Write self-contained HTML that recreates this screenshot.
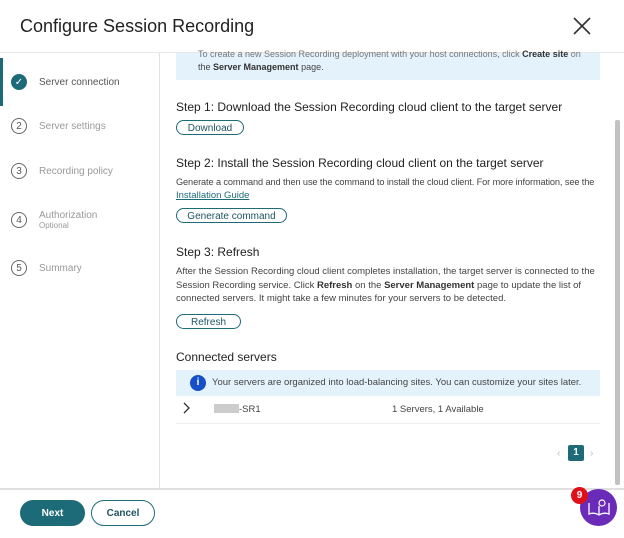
<!DOCTYPE html>
<html><head><style>
*{margin:0;padding:0;box-sizing:border-box}
body{width:624px;height:538px;background:#fff;font-family:"Liberation Sans",sans-serif;color:#333;position:relative;overflow:hidden}
.abs{position:absolute}
.h1{left:20px;top:16px;font-size:18px;color:#222}
.side{left:0;top:53px;width:160px;height:435px;border-right:1px solid #e2e2e2}
.topline{left:0;top:52px;width:624px;height:1px;background:#e8e8e8}
.footline{left:0;top:488px;width:624px;height:2px;background:#e0e0e0}
.step{left:11px;font-size:10px;color:#999;display:flex;align-items:center}
.num{width:16px;height:16px;border:1.3px solid #666;border-radius:50%;font-size:10px;color:#555;display:flex;align-items:center;justify-content:center;margin-right:12px}
.t{font-size:10px;color:#444;white-space:nowrap}
.h{font-size:12px;color:#222}
.btn{border:1.5px solid #1d6b78;border-radius:10px;font-size:10px;color:#1d5561;height:15px;display:flex;align-items:center;justify-content:center;padding-top:1px}
.fb{display:flex;align-items:center;justify-content:center;padding-top:1px}
b{color:#333}
</style></head><body>
<div class="abs h1">Configure Session Recording</div>
<svg class="abs" style="left:573px;top:17px" width="18" height="18"><path d="M1 1L17 17M17 1L1 17" stroke="#333" stroke-width="1.6"/></svg>
<div class="abs topline"></div>
<div class="abs side"></div>
<div class="abs" style="left:0;top:58px;width:3px;height:48px;background:#1d6b78"></div>
<div class="abs step" style="top:74px"><div class="num" style="background:#1d6b78;border-color:#1d6b78;color:#fff">✓</div><span style="color:#555">Server connection</span></div>
<div class="abs step" style="top:118px"><div class="num">2</div>Server settings</div>
<div class="abs step" style="top:163px"><div class="num">3</div>Recording policy</div>
<div class="abs step" style="top:210px"><div class="num">4</div><div>Authorization<div style="font-size:8px">Optional</div></div></div>
<div class="abs step" style="top:260px"><div class="num">5</div>Summary</div>

<div class="abs" style="left:176px;top:53px;width:424px;height:27px;background:#e4f2fb"></div>
<div class="abs t" style="left:198px;top:49px;font-size:9px;color:#777">To create a new Session Recording deployment with your host connections, click <b>Create site</b> on</div>
<div class="abs t" style="left:198px;top:62px;font-size:9px">the <b>Server Management</b> page.</div>

<div class="abs h" style="left:176px;top:100px">Step 1: Download the Session Recording cloud client to the target server</div>
<div class="abs btn" style="left:176px;top:120px;width:68px">Download</div>
<div class="abs h" style="left:176px;top:156px">Step 2: Install the Session Recording cloud client on the target server</div>
<div class="abs t" style="left:176px;top:177px;font-size:9.2px;letter-spacing:-0.1px">Generate a command and then use the command to install the cloud client. For more information, see the</div>
<div class="abs t" style="left:176px;top:190px;font-size:9.5px;color:#1d6b78;text-decoration:underline">Installation Guide</div>
<div class="abs btn" style="left:176px;top:208px;width:111px">Generate command</div>
<div class="abs h" style="left:176px;top:245px">Step 3: Refresh</div>
<div class="abs t" style="left:176px;top:265px;font-size:9.5px;line-height:13.5px;width:430px;white-space:normal">After the Session Recording cloud client completes installation, the target server is connected to the Session Recording service. Click <b>Refresh</b> on the <b>Server Management</b> page to update the list of connected servers. It might take a few minutes for your servers to be detected.</div>
<div class="abs btn" style="left:176px;top:314px;width:65px">Refresh</div>
<div class="abs h" style="left:176px;top:350px">Connected servers</div>
<div class="abs" style="left:176px;top:370px;width:424px;height:26px;background:#e4f2fb"></div>
<div class="abs" style="left:190px;top:375px;width:16px;height:16px;border-radius:50%;background:#1650c8;color:#fff;font-size:10px;text-align:center;line-height:16px;font-weight:bold">i</div>
<div class="abs t" style="left:212px;top:377px;font-size:9.5px">Your servers are organized into load-balancing sites. You can customize your sites later.</div>
<svg class="abs" style="left:182px;top:402px" width="10" height="12"><path d="M2 1L7 6L2 11" stroke="#333" stroke-width="1.3" fill="none"/></svg>
<div class="abs" style="left:214px;top:404px;width:25px;height:9px;background:#ccc"></div>
<div class="abs t" style="left:239px;top:404px;font-size:9.5px">-SR1</div>
<div class="abs t" style="left:392px;top:404px;font-size:9.5px">1 Servers, 1 Available</div>
<div class="abs" style="left:176px;top:423px;width:424px;height:1px;background:#eee"></div>
<div class="abs" style="left:557px;top:448px;font-size:10px;color:#bbb">‹</div>
<div class="abs" style="left:568px;top:445px;width:16px;height:16px;background:#1d6b78;color:#fff;font-size:10px;font-weight:bold;text-align:center;line-height:16px;border-radius:2px">1</div>
<div class="abs" style="left:590px;top:448px;font-size:10px;color:#bbb">›</div>
<div class="abs" style="left:615px;top:120px;width:5px;height:365px;background:#c2c2c2;border-radius:2px"></div>

<div class="abs footline"></div>
<div class="abs fb" style="left:20px;top:500px;width:65px;height:26px;border-radius:13px;background:#1d6b78;color:#fff;font-size:10px;font-weight:bold">Next</div>
<div class="abs fb" style="left:91px;top:500px;width:64px;height:26px;border-radius:13px;border:1.5px solid #1d6b78;color:#1d5561;font-size:10px;font-weight:bold">Cancel</div>
<div class="abs" style="left:580px;top:489px;width:37px;height:37px;border-radius:50%;background:#6a2bb8"></div>
<svg class="abs" style="left:587px;top:497px" width="24" height="20"><path d="M2 6V17Q7 15 12 18Q17 15 22 17V6M12 9V18" stroke="#fff" stroke-width="1.3" fill="none"/><circle cx="15" cy="6" r="3" stroke="#fff" fill="none" stroke-width="1.2"/></svg>
<div class="abs" style="left:571px;top:487px;width:17px;height:17px;border-radius:50%;background:#e0101a;color:#fff;font-size:10px;text-align:center;line-height:17px;font-weight:bold">9</div>
</body></html>
